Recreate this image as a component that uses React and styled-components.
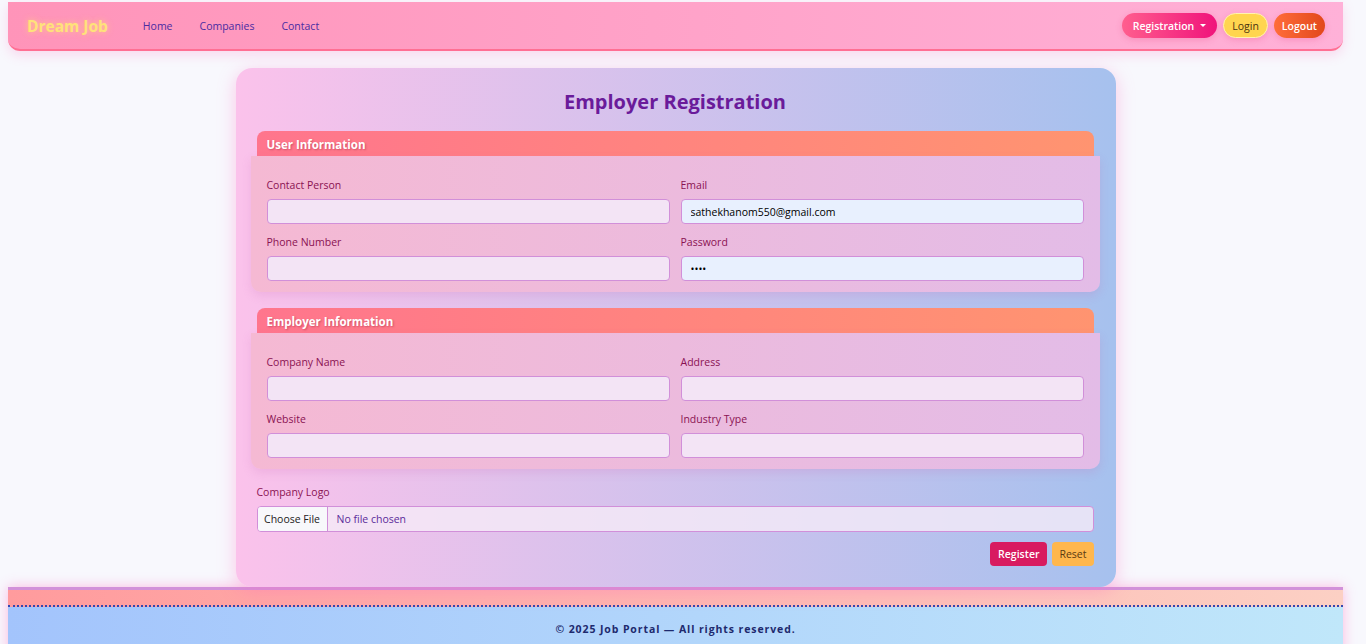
import React from "react";
import styled, { createGlobalStyle } from "styled-components";

const GlobalStyle = createGlobalStyle`
  body {
    margin: 0;
    background: #f8f8fd;
    font-family: "Open Sans", "Noto Sans", sans-serif;
  }
  * { box-sizing: border-box; }
`;

const Page = styled.div`
  padding: 2px 23px 0 8px;
`;

const Nav = styled.nav`
  height: 49px;
  display: flex;
  align-items: center;
  padding: 0 18px 0 19px;
  background: linear-gradient(90deg, #ff94b9, #ffb1d8);
  border-bottom: 2px solid #ff6f93;
  border-radius: 0 0 12px 12px;
  box-shadow: 0 4px 12px rgba(255, 105, 180, 0.22);
`;

const Brand = styled.a`
  font-size: 15.5px;
  font-weight: 700;
  color: #ffe27a;
  text-shadow: 0 0 6px rgba(255, 225, 110, 0.7);
  text-decoration: none;
  margin-right: 35px;
`;

const NavLinks = styled.div`
  display: flex;
  gap: 27px;
`;

const NavLink = styled.a`
  font-size: 10.5px;
  color: #4a2ca2;
  text-decoration: none;
`;

const Actions = styled.div`
  margin-left: auto;
  display: flex;
  align-items: center;
  gap: 6px;
`;

const Pill = styled.button`
  height: 25px;
  border-radius: 13px;
  padding: 0 ${({ $pad }) => $pad || 11}px;
  font-family: inherit;
  font-size: 10.5px;
  font-weight: ${({ $light }) => ($light ? 500 : 600)};
  display: flex;
  align-items: center;
  gap: 6px;
  cursor: pointer;
  color: ${({ $dark }) => ($dark ? "#4a3410" : "#fff")};
  background: ${({ $bg }) => $bg};
  border: ${({ $border }) => $border || "none"};
  box-shadow: 0 2px 6px rgba(230, 60, 120, 0.25);
`;

const Caret = styled.span`
  width: 0;
  height: 0;
  border-left: 3px solid transparent;
  border-right: 3px solid transparent;
  border-top: 3px solid #fff;
`;

const Main = styled.main`
  display: flex;
  justify-content: center;
  padding-top: 17px;
`;

const Card = styled.div`
  width: 880px;
  padding: 19px 22px 21px 21px;
  border-radius: 16px;
  background: linear-gradient(90deg, #fbc2eb, #a6c1ee);
  box-shadow: 0 4px 18px rgba(255, 110, 190, 0.35);
`;

const Title = styled.h2`
  margin: 0 0 14px;
  text-align: center;
  font-size: 20px;
  line-height: 30px;
  font-weight: 700;
  color: #6a1b9a;
`;

const Section = styled.section`
  margin-bottom: 16px;

  &:nth-of-type(2) {
    margin-bottom: 15px;
  }
`;

const SectionHeader = styled.div`
  height: 25px;
  padding: 0 10px;
  border-radius: 8px 8px 0 0;
  background: linear-gradient(90deg, #ff758d, #ff9470);
  color: #fff;
  font-size: 11.5px;
  font-weight: 700;
  line-height: 27px;
  text-shadow: 1px 1px 2px rgba(120, 0, 40, 0.35);
`;

const SectionBody = styled.div`
  margin: 0 -6px;
  padding: 21px 16px 11px 16px;
  border-radius: 0 0 10px 10px;
  background: linear-gradient(90deg, #f5b9d3, #e3bce7);
  box-shadow: 0 4px 10px rgba(200, 100, 180, 0.18);
  display: grid;
  grid-template-columns: 1fr 1fr;
  column-gap: 11px;
  row-gap: 10px;
`;

const Field = styled.div`
  display: flex;
  flex-direction: column;
`;

const Label = styled.label`
  font-size: 10.5px;
  line-height: 16px;
  color: #8a1252;
  margin-bottom: 6px;
`;

const Input = styled.input`
  height: 25px;
  border: 1px solid #d18fd9;
  border-radius: 4px;
  padding: 0 9px;
  font-family: inherit;
  font-size: 10.5px;
  color: #000;
  background: ${({ $filled }) => ($filled ? "#e8f0fe" : "#f3e4f5")};
  outline: none;
`;

const FileBox = styled.div`
  height: 26px;
  display: flex;
  align-items: stretch;
  border: 1px solid #d18fd9;
  border-radius: 4px;
  background: rgba(245, 235, 248, 0.8);
  overflow: hidden;
`;

const FileButton = styled.span`
  width: 70px;
  display: flex;
  align-items: center;
  justify-content: center;
  background: #f8f8fb;
  border-right: 1px solid #d18fd9;
  font-size: 10.5px;
  color: #222;
`;

const FileName = styled.span`
  display: flex;
  align-items: center;
  padding-left: 9px;
  font-size: 10.5px;
  color: #5b2c9a;
`;

const ButtonRow = styled.div`
  margin-top: 10px;
  display: flex;
  justify-content: flex-end;
  gap: 5px;
`;

const FormButton = styled.button`
  height: 24px;
  padding: 0 ${({ $pad }) => $pad}px;
  border: none;
  border-radius: 4px;
  font-family: inherit;
  font-size: 10.5px;
  font-weight: ${({ $bold }) => ($bold ? 600 : 400)};
  color: ${({ $color }) => $color};
  background: ${({ $bg }) => $bg};
  cursor: pointer;
`;

const Footer = styled.footer`
  border-top: 3px solid #d291d9;
  box-shadow: 0 0 12px rgba(255, 110, 190, 0.45);
`;

const FooterStrip = styled.div`
  height: 17px;
  background: linear-gradient(90deg, #ff9b9d, #fcd0c4);
  border-bottom: 2px dotted #3347b0;
`;

const FooterText = styled.div`
  padding: 15px 0 22px;
  text-align: center;
  background: linear-gradient(90deg, #a3c4fc, #c0e7fa);
  font-size: 10.5px;
  font-weight: 700;
  letter-spacing: 0.9px;
  color: #1e2a6e;
`;

const userFields = [
  { id: 1, label: "Contact Person", value: "" },
  { id: 2, label: "Email", value: "sathekhanom550@gmail.com", filled: true },
  { id: 3, label: "Phone Number", value: "" },
  { id: 4, label: "Password", value: "1234", filled: true, type: "password" },
];

const employerFields = [
  { id: 1, label: "Company Name" },
  { id: 2, label: "Address" },
  { id: 3, label: "Website" },
  { id: 4, label: "Industry Type" },
];

const FormSection = ({ title, fields }) => (
  <Section>
    <SectionHeader>{title}</SectionHeader>
    <SectionBody>
      {fields.map((f) => (
        <Field key={f.id}>
          <Label>{f.label}</Label>
          <Input
            type={f.type || "text"}
            defaultValue={f.value || ""}
            $filled={f.filled}
          />
        </Field>
      ))}
    </SectionBody>
  </Section>
);

const App = () => {
  return (
    <>
      <GlobalStyle />
      <Page>
        <Nav>
          <Brand href="#">Dream Job</Brand>
          <NavLinks>
            <NavLink href="#">Home</NavLink>
            <NavLink href="#">Companies</NavLink>
            <NavLink href="#">Contact</NavLink>
          </NavLinks>
          <Actions>
            <Pill $bg="linear-gradient(90deg, #ff5e8e, #f0137b)" $pad={11}>
              Registration <Caret />
            </Pill>
            <Pill $bg="#ffd54f" $dark $light $border="1px solid #fff3b0" $pad={8}>
              Login
            </Pill>
            <Pill $bg="linear-gradient(90deg, #ff6d3a, #e2481b)" $pad={8}>
              Logout
            </Pill>
          </Actions>
        </Nav>
        <Main>
          <Card>
            <Title>Employer Registration</Title>
            <FormSection title="User Information" fields={userFields} />
            <FormSection title="Employer Information" fields={employerFields} />
            <Field>
              <Label>Company Logo</Label>
              <FileBox>
                <FileButton>Choose File</FileButton>
                <FileName>No file chosen</FileName>
              </FileBox>
            </Field>
            <ButtonRow>
              <FormButton $bg="#d81b60" $color="#fff" $bold $pad={8}>
                Register
              </FormButton>
              <FormButton $bg="#ffb74d" $color="#5a3a12" $pad={7}>
                Reset
              </FormButton>
            </ButtonRow>
          </Card>
        </Main>
        <Footer>
          <FooterStrip />
          <FooterText>© 2025 Job Portal — All rights reserved.</FooterText>
        </Footer>
      </Page>
    </>
  );
};

export default App;
